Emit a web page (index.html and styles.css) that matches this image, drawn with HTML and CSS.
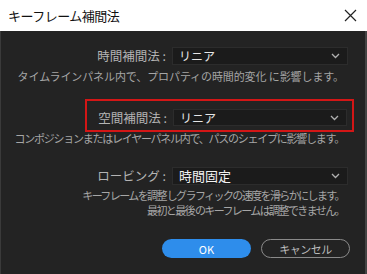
FILE: index.html
```html
<!DOCTYPE html>
<html>
<head>
  <meta charset="UTF-8">
  <title>キーフレーム補間法</title>
  <link rel="stylesheet" href="styles.css">
</head>
<body>
  <div class="dialog">
    <div class="title-bar">
      <span>キーフレーム補間法</span>
      <button class="x-icon">
        <svg width="13" height="13" viewBox="0 0 13 13"><path d="M1 1L12 12M12 1L1 12" stroke="#222" stroke-width="1.2" fill="none"/></svg>
      </button>
    </div>

    <div class="content">
      <!-- temporal -->
      <div class="fieldRow rowTime">
        <span class="label">時間補間法 :</span>
        <div class="dropdown">
          <span>リニア</span>
          <svg class="chev" width="9" height="6" viewBox="0 0 9 6"><path d="M1 1L4.5 4.5L8 1" stroke="#b0b0b0" stroke-width="1.3" fill="none"/></svg>
        </div>
      </div>
      <div class="desc descTime">タイムラインパネル内で、プロパティの時間的変化 に影響します。</div>

      <!-- spatial, highlighted -->
      <div class="redBox">
        <div class="fieldRow rowSpace">
          <span class="label">空間補間法 :</span>
          <div class="dropdown">
            <span>リニア</span>
            <svg class="chev" width="9" height="6" viewBox="0 0 9 6"><path d="M1 1L4.5 4.5L8 1" stroke="#b0b0b0" stroke-width="1.3" fill="none"/></svg>
          </div>
        </div>
      </div>
      <div class="desc descSpace">コンポジションまたはレイヤーパネル内で、パスのシェイプに影響します。</div>

      <!-- roving -->
      <div class="fieldRow rowRove">
        <span class="label">ロービング :</span>
        <div class="dropdown big">
          <span>時間固定</span>
          <svg class="chev" width="9" height="6" viewBox="0 0 9 6"><path d="M1 1L4.5 4.5L8 1" stroke="#b0b0b0" stroke-width="1.3" fill="none"/></svg>
        </div>
      </div>
      <div class="desc descRove">
        <div class="line1">キーフレームを調整 しグラフィックの速度を滑らかにします。</div>
        <div class="line2">最初と最後 のキーフレームは調整できません。</div>
      </div>

      <div class="buttonRow">
        <button class="okButton">OK</button>
        <button class="cancelButton">キャンセル</button>
      </div>
    </div>
  </div>
</body>
</html>
```

FILE: styles.css
```css
body {
  font-family: "Noto Sans CJK JP", "Noto Sans", sans-serif;
  margin: 0;
  padding: 0;
  overflow: hidden;
  background: #232323;
}

.dialog {
  width: 367px;
  height: 274px;
  display: flex;
  flex-direction: column;
}

.title-bar {
  flex-shrink: 0;
  height: 31px;
  background-color: #fff;
  color: #111;
  display: flex;
  align-items: center;
  padding: 0 8px;
  font-size: 13px;
  letter-spacing: -0.5px;
  box-sizing: border-box;
}
.title-bar button {
  margin-left: auto;
  margin-right: 2px;
  background: none;
  border: none;
  padding: 0;
  display: flex;
}

.content {
  flex: 1;
  background: #232323;
  border-left: 1px solid #3a3a3a;
  border-right: 2px solid #444;
  padding-top: 15px;
}

.fieldRow {
  display: flex;
  justify-content: flex-end;
  align-items: center;
  gap: 6px;
  padding-right: 17px;
}

.label {
  color: #b4b4b4;
  font-size: 12.5px;
  white-space: pre;
}

.dropdown {
  width: 176px;
  height: 18px;
  box-sizing: border-box;
  background: #1b1b1b;
  border: 1px solid #2c2c2c;
  display: flex;
  align-items: center;
  padding: 0 7px 0 6px;
  color: #e6e6e6;
  font-size: 12px;
}
.dropdown.big {
  font-size: 13px;
  color: #f2f2f2;
}
.chev {
  margin-left: auto;
}

.desc {
  color: #a6a6a6;
  font-size: 11px;
  line-height: 15px;
  text-align: right;
  padding-right: 21px;
  white-space: pre;
}
.descTime {
  margin-top: 4px;
  letter-spacing: -0.1px;
}

.redBox {
  margin: 15px 0 0 84px;
  width: 269px;
  height: 33px;
  box-sizing: border-box;
  border: 2px solid #d31616;
  padding-top: 7px;
}
.rowSpace {
  padding-right: 5px;
}
.rowSpace .dropdown {
  height: 17px;
  width: 174px;
}

.descSpace {
  margin-top: -1px;
  letter-spacing: -1.25px;
}

.rowRove {
  margin-top: 20px;
}
.descRove {
  margin-top: 3px;
  white-space: normal;
}
.line1 {
  white-space: pre;
  letter-spacing: -1.6px;
}
.line2 {
  white-space: pre;
  letter-spacing: -1.6px;
}

.buttonRow {
  display: flex;
  justify-content: flex-end;
  gap: 10px;
  padding-right: 15px;
  margin-top: 21px;
}
.okButton,
.cancelButton {
  width: 89px;
  height: 19px;
  border-radius: 10px;
  font-family: inherit;
  font-size: 11px;
  padding: 0;
  box-sizing: border-box;
}
.okButton {
  background: #2e8deb;
  border: none;
  color: #fff;
}
.cancelButton {
  background: transparent;
  border: 1.5px solid #8a8a8a;
  color: #bdbdbd;
  letter-spacing: -0.5px;
}
```
